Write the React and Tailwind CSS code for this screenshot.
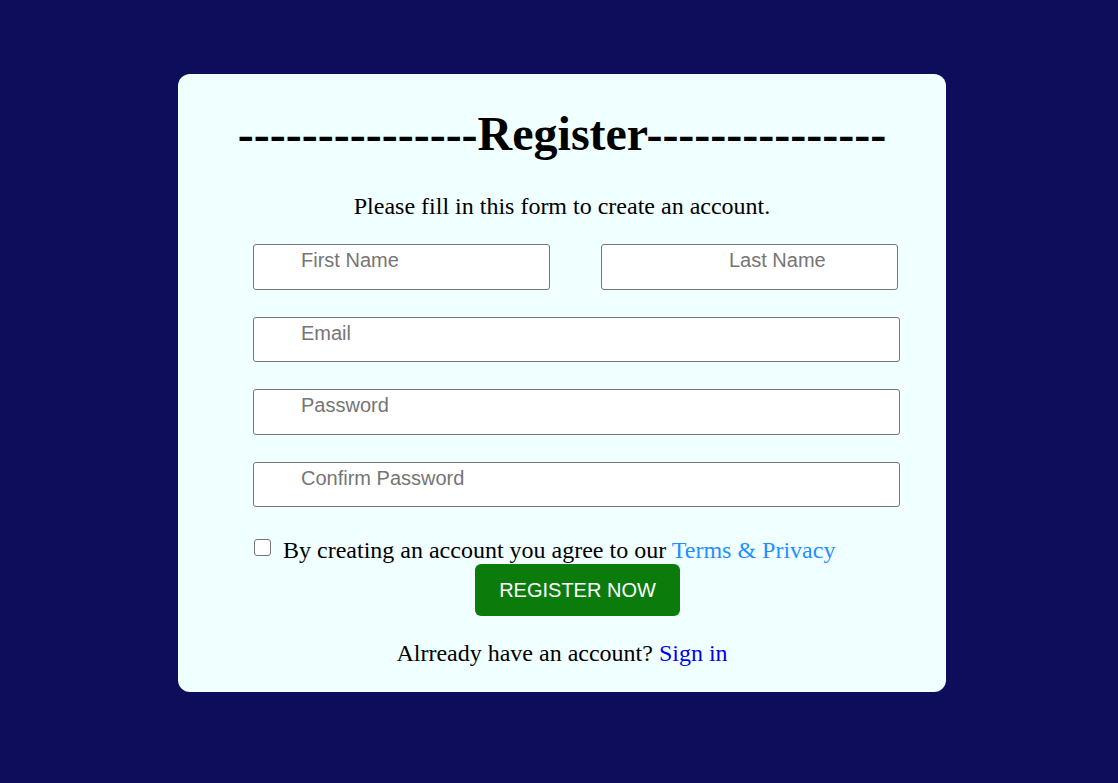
export default function App() {
  const serif = { fontFamily: '"Liberation Serif", "Times New Roman", serif' };
  const inputCls =
    "block box-border h-[45.5px] border border-[#767676] rounded-[3px] bg-white pt-[4px] pb-[16px] pr-2 text-[20px] text-black placeholder:text-[#757575] outline-none font-['Liberation_Sans',Arial,sans-serif]";
  return (
    <div className="min-h-[783px] w-full bg-[#0e0d5c] flex justify-center items-start pl-[6px] pt-[74px]" style={serif}>
      <div className="w-[768px] bg-[#f0ffff] rounded-[12px] pt-[32px] pb-[25px] text-black">
        <h1 className="text-center text-[48px] font-bold leading-[55px]">
          ---------------Register---------------
        </h1>
        <p className="text-center text-[24px] leading-[27px] mt-[32px]">
          Please fill in this form to create an account.
        </p>
        <div className="ml-[75px] w-[647px] mt-[24px]">
          <div className="flex gap-[51px]">
            <input className={inputCls + " w-[297px] pl-[47px]"} placeholder="First Name" />
            <input className={inputCls + " w-[297px] pl-[127px]"} placeholder="Last Name" />
          </div>
          <input className={inputCls + " w-[647px] pl-[47px] mt-[27px]"} placeholder="Email" />
          <input type="password" className={inputCls + " w-[647px] pl-[47px] mt-[27px]"} placeholder="Password" />
          <input type="password" className={inputCls + " w-[647px] pl-[47px] mt-[27px]"} placeholder="Confirm Password" />
          <div className="flex items-start mt-[30px] text-[24px] leading-[27px]">
            <span className="block w-[17px] h-[17px] mt-[2px] ml-[1px] border border-[#767676] rounded-[3px] bg-white shrink-0"></span>
            <span className="ml-[12px] whitespace-nowrap">
              By creating an account you agree to our{" "}
              <a className="text-[#1e90ff]">Terms &amp; Privacy</a>
            </span>
          </div>
          <div className="flex justify-center pl-[2px]">
            <button className="h-[52px] px-[24px] bg-[#0b7c0b] rounded-[6px] text-white text-[20px] leading-[23px] font-['Liberation_Sans',Arial,sans-serif]">
              REGISTER NOW
            </button>
          </div>
        </div>
        <p className="text-center text-[24px] leading-[27px] mt-[24px]">
          Alrready have an account? <a className="text-[#0000ee]">Sign in</a>
        </p>
      </div>
    </div>
  );
}
